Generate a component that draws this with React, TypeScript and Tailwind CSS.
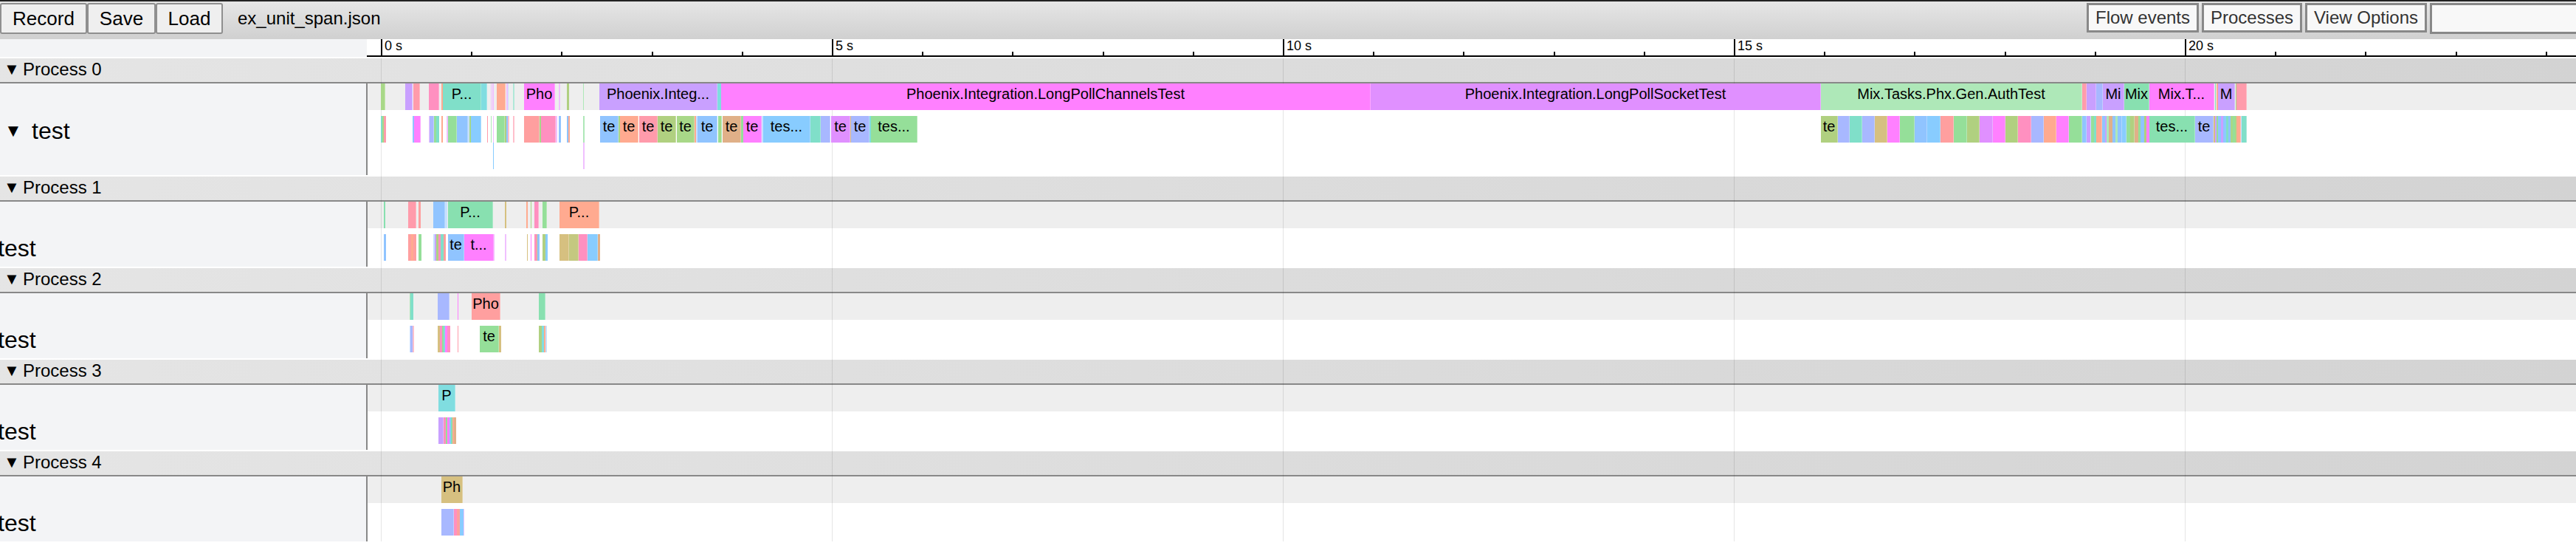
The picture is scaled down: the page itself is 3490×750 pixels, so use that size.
const C = {
  green: "#95df99",
  lime: "#a8d888",
  olive: "#b0d080",
  khaki: "#c4c880",
  tan: "#d6c080",
  orange: "#e0b088",
  salmon: "#ffaa90",
  red: "#ff9f9f",
  rose: "#ff9bab",
  pink: "#ff90c0",
  magenta: "#ff80ff",
  orchid: "#e090ff",
  purple: "#c9a0ff",
  peri: "#a8b8ff",
  blue: "#90c4ff",
  sky: "#88ccff",
  cyan: "#80dde0",
  teal: "#80dfc9",
  mint: "#88e0b0",
  pale: "#aee8b8",
  paleBlue: "#c8e0ff",
  paleRose: "#ffc0cc",
  paleOrchid: "#f0c0ff",
};

type Bar = [number, number, string, string?];

// x positions are page pixels, the tracks start at x=498
function Track({ bars, top }: { bars: Bar[]; top: boolean }) {
  return (
    <div className={`relative h-9 ${top ? "bg-[#eeeeee]" : ""}`}>
      {bars.map(([a, b, color, label], i) => (
        <div
          key={i}
          className={`absolute top-0 z-10 box-border h-full overflow-hidden whitespace-nowrap text-center text-[20px] leading-7 text-black ${
            b - a > 5 ? "border-r border-white/30" : ""
          }`}
          style={{ left: a - 498, width: b - a, backgroundColor: color }}
        >
          {label}
        </div>
      ))}
    </div>
  );
}

const p0Top: Bar[] = [
  [516, 522, C.lime],
  [549, 559, C.purple],
  [560, 569, C.rose],
  [581, 595, C.pink],
  [598, 600, C.salmon],
  [600, 652, C.teal, "P..."],
  [652, 660, C.cyan],
  [665, 666, C.paleOrchid],
  [667, 669, C.paleOrchid],
  [673, 685, C.salmon],
  [686, 688, C.paleOrchid],
  [688, 689, C.paleBlue],
  [695, 697, "#b0e8d8"],
  [710, 752, C.magenta, "Pho"],
  [757, 759, C.paleOrchid],
  [768, 771, C.olive],
  [790, 791, C.pale],
  [812, 972, C.purple, "Phoenix.Integ..."],
  [972, 977, C.cyan],
  [977, 1857, C.magenta, "Phoenix.Integration.LongPollChannelsTest"],
  [1857, 2467, C.orchid, "Phoenix.Integration.LongPollSocketTest"],
  [2467, 2821, C.pale, "Mix.Tasks.Phx.Gen.AuthTest"],
  [2821, 2827, C.rose],
  [2827, 2840, C.purple],
  [2840, 2849, C.peri],
  [2849, 2878, C.purple, "Mi"],
  [2878, 2912, C.mint, "Mix"],
  [2912, 3000, C.magenta, "Mix.T..."],
  [3001, 3002, C.mint],
  [3003, 3005, C.salmon],
  [3005, 3028, C.purple, "M"],
  [3029, 3030, C.lime],
  [3030, 3044, C.rose],
];

const p0Mid: Bar[] = [
  [516, 518, C.teal],
  [518, 520, C.lime],
  [520, 523, C.rose],
  [559, 561, C.blue],
  [561, 570, C.magenta],
  [581, 582, C.paleOrchid],
  [582, 588, C.peri],
  [588, 591, C.green],
  [591, 595, C.teal],
  [598, 600, C.salmon],
  [605, 607, C.paleOrchid],
  [607, 619, C.green],
  [619, 634, C.blue],
  [634, 636, C.paleBlue],
  [636, 638, C.lime],
  [638, 652, C.sky],
  [660, 661, C.rose],
  [665, 666, C.pale],
  [668, 669, C.paleOrchid],
  [673, 684, C.green],
  [684, 686, C.olive],
  [686, 688, C.blue],
  [688, 690, C.paleRose],
  [695, 697, C.paleRose],
  [710, 731, C.red],
  [731, 733, C.lime],
  [733, 753, C.pink],
  [753, 755, C.paleOrchid],
  [757, 760, C.blue],
  [768, 770, C.blue],
  [770, 772, C.salmon],
  [790, 792, C.pale],
  [813, 838, C.blue, "te"],
  [838, 840, C.lime],
  [840, 865, C.salmon, "te"],
  [866, 891, C.rose, "te"],
  [891, 916, C.olive, "te"],
  [917, 941, C.lime, "te"],
  [941, 943, C.salmon],
  [943, 945, C.paleBlue],
  [945, 972, C.blue, "te"],
  [973, 975, C.green],
  [975, 977, C.lime],
  [977, 978, C.pale],
  [979, 1004, C.orange, "te"],
  [1004, 1007, C.green],
  [1007, 1032, C.magenta, "te"],
  [1032, 1034, C.paleBlue],
  [1034, 1098, C.sky, "tes..."],
  [1098, 1112, C.teal],
  [1112, 1125, C.peri],
  [1126, 1152, C.orchid, "te"],
  [1152, 1153, C.tan],
  [1153, 1178, C.peri, "te"],
  [1178, 1180, C.cyan],
  [1180, 1243, C.green, "tes..."],
  [2467, 2490, C.olive, "te"],
  [2490, 2506, C.peri],
  [2506, 2523, C.teal],
  [2523, 2540, C.peri],
  [2540, 2557, C.tan],
  [2557, 2574, C.magenta],
  [2574, 2594, C.green],
  [2594, 2611, C.blue],
  [2611, 2629, C.sky],
  [2629, 2647, C.red],
  [2647, 2665, C.green],
  [2665, 2682, C.olive],
  [2682, 2700, C.orchid],
  [2700, 2717, C.magenta],
  [2717, 2734, C.olive],
  [2734, 2752, C.pink],
  [2752, 2769, C.peri],
  [2769, 2786, C.salmon],
  [2786, 2803, C.magenta],
  [2803, 2821, C.green],
  [2821, 2827, C.blue],
  [2827, 2832, C.purple],
  [2832, 2833, C.paleBlue],
  [2833, 2837, C.green],
  [2837, 2840, C.teal],
  [2840, 2848, C.salmon],
  [2848, 2852, C.blue],
  [2852, 2854, C.purple],
  [2854, 2857, C.pale],
  [2857, 2862, C.orange],
  [2862, 2866, C.blue],
  [2866, 2869, C.pale],
  [2869, 2875, C.blue],
  [2875, 2881, C.sky],
  [2881, 2886, C.green],
  [2886, 2892, C.olive],
  [2892, 2897, C.orange],
  [2897, 2900, C.green],
  [2900, 2905, C.blue],
  [2905, 2908, C.olive],
  [2908, 2912, C.magenta],
  [2912, 2974, C.mint, "tes..."],
  [2974, 2999, C.peri, "te"],
  [2999, 3001, C.tan],
  [3001, 3003, C.purple],
  [3003, 3005, C.green],
  [3005, 3009, C.blue],
  [3009, 3012, C.purple],
  [3012, 3014, C.blue],
  [3014, 3016, C.sky],
  [3016, 3019, C.teal],
  [3019, 3022, C.blue],
  [3022, 3025, C.lime],
  [3025, 3028, C.green],
  [3028, 3030, C.lime],
  [3030, 3036, C.salmon],
  [3036, 3037, C.paleBlue],
  [3037, 3044, C.teal],
];

const p0Low: Bar[] = [
  [668, 669, C.sky],
  [790, 792, C.paleOrchid],
];

const p1Top: Bar[] = [
  [520, 522, C.mint],
  [553, 564, C.rose],
  [567, 570, C.red],
  [587, 603, C.blue],
  [603, 606, C.paleBlue],
  [607, 668, C.mint, "P..."],
  [684, 686, C.tan],
  [713, 715, C.salmon],
  [719, 720, C.lime],
  [724, 730, C.pink],
  [735, 741, C.green],
  [758, 812, C.salmon, "P..."],
];

const p1Mid: Bar[] = [
  [520, 523, C.blue],
  [553, 557, C.red],
  [557, 560, C.salmon],
  [560, 564, C.red],
  [567, 571, C.green],
  [587, 589, C.paleBlue],
  [589, 591, C.purple],
  [591, 594, C.olive],
  [594, 597, C.pink],
  [597, 601, C.teal],
  [601, 604, C.red],
  [607, 629, C.blue, "te"],
  [629, 669, C.magenta, "t..."],
  [669, 670, C.paleOrchid],
  [684, 686, C.paleOrchid],
  [714, 715, C.tan],
  [719, 720, C.magenta],
  [724, 727, C.pink],
  [727, 728, C.tan],
  [728, 731, C.blue],
  [735, 739, C.olive],
  [739, 742, C.sky],
  [758, 771, C.tan],
  [771, 784, C.khaki],
  [784, 796, C.pink],
  [796, 810, C.sky],
  [810, 813, C.orange],
];

const p2Top: Bar[] = [
  [555, 556, C.pale],
  [556, 560, C.teal],
  [593, 609, C.peri],
  [620, 621, C.magenta],
  [639, 678, C.red, "Pho"],
  [730, 739, C.mint],
];

const p2Mid: Bar[] = [
  [555, 556, C.paleBlue],
  [556, 559, C.peri],
  [559, 561, C.paleRose],
  [593, 596, C.tan],
  [596, 599, C.pink],
  [599, 601, C.green],
  [601, 603, C.cyan],
  [603, 606, C.magenta],
  [606, 610, C.pink],
  [620, 621, C.rose],
  [650, 676, C.green, "te"],
  [676, 679, C.tan],
  [730, 734, C.olive],
  [734, 737, C.cyan],
  [737, 739, C.salmon],
  [739, 741, C.paleBlue],
];

const p3Top: Bar[] = [[594, 617, C.cyan, "P"]];

const p3Mid: Bar[] = [
  [594, 601, C.purple],
  [601, 604, C.pink],
  [604, 606, C.green],
  [606, 609, C.magenta],
  [609, 611, C.sky],
  [611, 613, C.mint],
  [613, 615, C.salmon],
  [615, 618, C.orange],
];

const p4Top: Bar[] = [[598, 627, C.tan, "Ph"]];

const p4Mid: Bar[] = [
  [598, 615, C.peri],
  [615, 619, C.pink],
  [619, 623, C.red],
  [623, 628, C.sky],
  [628, 629, C.paleOrchid],
];

const processes = [
  { name: "Process 0", top: p0Top, mid: p0Mid, low: p0Low, height: 124 },
  { name: "Process 1", top: p1Top, mid: p1Mid, height: 88 },
  { name: "Process 2", top: p2Top, mid: p2Mid, height: 88 },
  { name: "Process 3", top: p3Top, mid: p3Mid, height: 88 },
  { name: "Process 4", top: p4Top, mid: p4Mid, height: 88 },
];

const axisX0 = 516;
const pxPerSecond = 122.2;

function Ruler() {
  const ticks = Array.from({ length: 25 }, (_, i) => i);
  return (
    <div className="relative h-6 flex-1 overflow-hidden border-b-2 border-black bg-white">
      {ticks.map((i) => {
        const major = i % 5 === 0;
        return (
          <div
            key={i}
            className={`absolute bottom-0 w-0.5 bg-black ${major ? "h-full" : "h-[5px]"}`}
            style={{ left: axisX0 - 497 + i * pxPerSecond }}
          >
            {major && (
              <span className="absolute left-[5px] top-0 whitespace-nowrap text-[18px] leading-[19px] text-black">
                {i} s
              </span>
            )}
          </div>
        );
      })}
    </div>
  );
}

function ToolButton({ children, width }: { children: string; width: string }) {
  return (
    <button
      className={`h-[42px] ${width} rounded-[3px] border-2 border-[#8f8f8f] bg-[#efefef] text-[26px] leading-none text-black`}
    >
      {children}
    </button>
  );
}

function OptionButton({ children, width }: { children: string; width: string }) {
  return (
    <button
      className={`h-[40px] ${width} border-[3px] border-[#888888] bg-[#f8f8f8] text-[24px] leading-none text-[#333333]`}
    >
      {children}
    </button>
  );
}

export default function App() {
  return (
    <div className="flex h-[750px] w-[3490px] flex-col overflow-hidden bg-white font-['Liberation_Sans',Arial,sans-serif]">
      <div className="h-0.5 bg-[#222222]" />
      <div className="flex h-[51px] items-start bg-gradient-to-b from-[#e6e6e6] to-[#d0d0d0] pt-0.5">
        <ToolButton width="w-[118px]">Record</ToolButton>
        <ToolButton width="w-[93px]">Save</ToolButton>
        <ToolButton width="w-[91px]">Load</ToolButton>
        <span className="ml-5 text-[24px] leading-[42px] text-black">ex_unit_span.json</span>
        <div className="ml-auto flex gap-1">
          <OptionButton width="w-[152px]">Flow events</OptionButton>
          <OptionButton width="w-[136px]">Processes</OptionButton>
          <OptionButton width="w-[165px]">View Options</OptionButton>
          <div className="h-[42px] w-[198px] border-y-[3px] border-l-[3px] border-[#888888] bg-[#f8f8f8]" />
        </div>
      </div>

      <div className="flex h-6">
        <div className="w-[497px] bg-[#f3f4f6]" />
        <Ruler />
      </div>

      <div className="relative flex flex-col">
        {/* second lines, drawn under the bars */}
        <div className="pointer-events-none absolute inset-x-0 bottom-0 top-0.5 z-[1]">
          {[0, 5, 10, 15, 20].map((s) => (
            <div
              key={s}
              className="absolute inset-y-0 w-px bg-black/10"
              style={{ left: axisX0 + s * pxPerSecond }}
            />
          ))}
        </div>
        {processes.map((p, i) => (
          <div key={p.name} className="mt-0.5">
            <div className="flex h-8 items-center bg-gradient-to-r from-[#e5e5e5] to-[#d3d3d3] pb-0.5 text-[24px] leading-8 text-black">
              <span className="w-[31px] pl-[5px] text-[22px]">▼</span>
              <span>{p.name}</span>
            </div>
            <div className="h-0.5 bg-[#888888]" />
            <div className="flex" style={{ height: p.height }}>
              <div className="relative w-[496px] overflow-hidden bg-[#f3f4f6]">
                {i === 0 ? (
                  <div className="absolute left-0 top-[46px] flex items-center whitespace-nowrap text-[32px] leading-9 text-black">
                    <span className="w-[43px] pl-1.5 text-[24px]">▼</span>
                    <span>test</span>
                  </div>
                ) : (
                  <span className="absolute left-[-3px] top-[45px] whitespace-nowrap text-[32px] leading-9 text-black">
                    test
                  </span>
                )}
              </div>
              <div className="w-0.5 bg-[#888888]" />
              <div className="flex-1">
                <Track bars={p.top} top />
                <div className="mt-2">
                  <Track bars={p.mid} top={false} />
                </div>
                {p.low && <Track bars={p.low} top={false} />}
              </div>
            </div>
          </div>
        ))}
      </div>
    </div>
  );
}
